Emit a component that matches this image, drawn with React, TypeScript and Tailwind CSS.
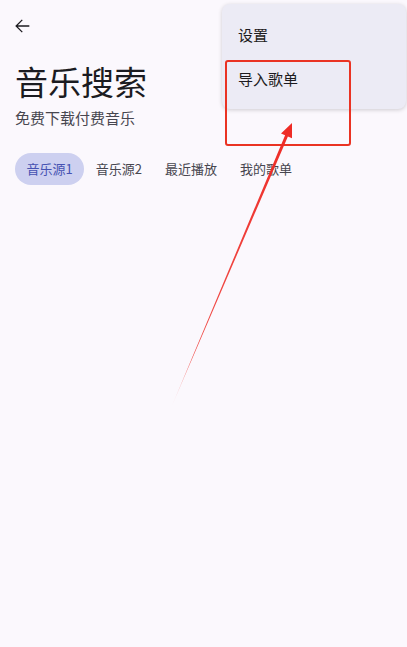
import React from 'react'

const tabs = ['音乐源1', '音乐源2', '最近播放', '我的歌单']

const App = () => {
    return (
        <div className="relative w-full h-[647px] overflow-hidden bg-[#fbf8fd] font-['Noto_Sans_CJK_SC',sans-serif]">
            <div className="pl-[11px] pt-[15px]">
                <svg width="22" height="22" viewBox="0 0 24 24" className="fill-[#1d1b20]">
                    <path d="M20 11.2H7.4l5.4-5.4-1-1L4.6 12l7.2 7.2 1-1-5.4-5.4H20z" />
                </svg>
            </div>
            <div className="px-[15px]">
                <h1 className="mt-[24px] text-[33px] leading-[40px] text-[#1b1b21]">音乐搜索</h1>
                <p className="mt-[6px] text-[15px] leading-[22px] text-[#47464f]">免费下载付费音乐</p>
            </div>
            <div className="mt-[24px] flex pl-[15px]">
                {tabs.map((t, i) => (
                    <div
                        key={t}
                        className={
                            i === 0
                                ? 'h-[32px] px-[11.5px] flex items-center rounded-full bg-[#cdd0f0] text-[13px] text-[#4652b2]'
                                : 'h-[32px] px-[11.5px] flex items-center text-[13px] text-[#47464f]'
                        }
                    >
                        {t}
                    </div>
                ))}
            </div>

            {/* overflow menu */}
            <div className="absolute left-[222px] top-[4px] w-[184px] h-[105px] rounded-lg bg-[#ecebf5] shadow-[0_1px_4px_rgba(0,0,0,0.18)] pt-[9px]">
                <div className="h-[44px] px-4 flex items-center text-[15px] text-[#1d1b20]">设置</div>
                <div className="h-[44px] px-4 flex items-center text-[15px] text-[#1d1b20]">导入歌单</div>
            </div>

            {/* annotation */}
            <div className="absolute left-[225px] top-[60px] w-[126px] h-[86px] border-2 border-[#ea3323] rounded-[3px]" />
            <svg className="absolute left-0 top-0 pointer-events-none" width="407" height="647" viewBox="0 0 407 647">
                <defs>
                    <linearGradient id="arrowFade" gradientUnits="userSpaceOnUse" x1="171" y1="408" x2="292" y2="123">
                        <stop offset="0" stopColor="#ee2a24" stopOpacity="0.05" />
                        <stop offset="0.18" stopColor="#ee2a24" stopOpacity="0.8" />
                        <stop offset="1" stopColor="#ee2a24" />
                    </linearGradient>
                </defs>
                <polygon
                    points="171,408 285.1,135.3 281,133.6 292,123 292,138.2 287.9,136.5"
                    fill="url(#arrowFade)"
                />
            </svg>
        </div>
    )
}

export default App
